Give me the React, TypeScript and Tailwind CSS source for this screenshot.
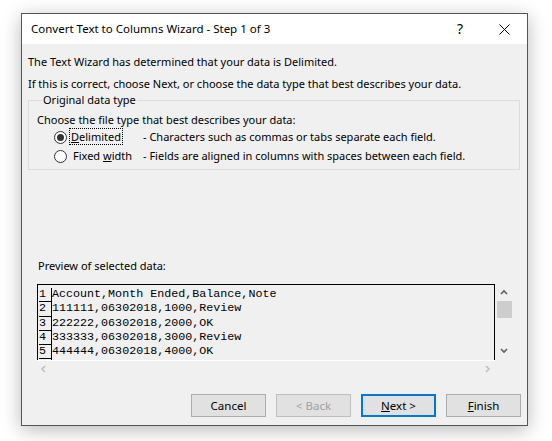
import React from 'react';

const rows = [
  'Account,Month Ended,Balance,Note',
  '111111,06302018,1000,Review',
  '222222,06302018,2000,OK',
  '333333,06302018,3000,Review',
  '444444,06302018,4000,OK',
];

function Chevron({ dir, className }: { dir: 'up' | 'down' | 'left' | 'right'; className?: string }) {
  const d =
    dir === 'up'
      ? 'M1 5 L4 2 L7 5'
      : dir === 'down'
      ? 'M1 2 L4 5 L7 2'
      : dir === 'left'
      ? 'M5 1 L2 4 L5 7'
      : 'M2 1 L5 4 L2 7';
  return (
    <svg width="8" height="8" viewBox="0 0 8 8" className={className}>
      <path d={d} fill="none" stroke="currentColor" strokeWidth="1.6" />
    </svg>
  );
}

function Radio({ checked }: { checked?: boolean }) {
  return (
    <span className="flex h-[13px] w-[13px] items-center justify-center rounded-full border border-[#333] bg-white">
      {checked && <span className="h-[7px] w-[7px] rounded-full bg-[#333]" />}
    </span>
  );
}

function Button({ children, variant }: { children: React.ReactNode; variant?: 'default' | 'disabled' }) {
  const cls =
    variant === 'default'
      ? 'border-2 border-[#0078d7] text-black'
      : variant === 'disabled'
      ? 'border border-[#bfbfbf] text-[#a0a0a0]'
      : 'border border-[#adadad] text-black';
  return (
    <button className={`flex h-[23px] w-[75px] items-center justify-center bg-[#e1e1e1] text-[11.5px] ${cls}`}>
      {children}
    </button>
  );
}

export default function App() {
  return (
    <div
      className="h-[441px] w-[552px] overflow-hidden bg-white pl-[21px] pt-[13px] text-[11px] leading-[16px] text-black"
      style={{ fontFamily: '"Noto Sans", "Open Sans", sans-serif' }}
    >
      <div className="flex h-[413px] w-[507px] flex-col border border-[#555] bg-[#f0f0f0] shadow-[0_4px_18px_rgba(0,0,0,0.28)]">
        {/* Title bar */}
        <div className="flex h-[30px] items-center bg-white pl-[9px] text-[11.5px]">
          <span className="flex-1">Convert Text to Columns Wizard - Step 1 of 3</span>
          <span className="mr-[36px] text-[14px]">?</span>
          <svg width="11" height="11" viewBox="0 0 11 11" className="mr-[17px]">
            <path d="M0.5 0.5 L10.5 10.5 M10.5 0.5 L0.5 10.5" stroke="#000" strokeWidth="1" />
          </svg>
        </div>

        {/* Body */}
        <div className="flex flex-1 flex-col px-[6px]">
          <p className="mt-[10px]">The Text Wizard has determined that your data is Delimited.</p>
          <p className="mt-[6px]">If this is correct, choose Next, or choose the data type that best describes your data.</p>

          <fieldset className="w-[492px] border border-[#dcdcdc] pb-[3px] pl-[8px]">
            <legend className="ml-[5px] px-[1px]">Original data type</legend>
            <p className="mt-[4px]">Choose the file type that best describes your data:</p>
            <div className="flex h-[18px] items-center pl-[17px]">
              <Radio checked />
              <span className="ml-[2px] w-[74px]">
                <span className="border border-dotted border-black px-[1px]">
                  <u>D</u>elimited
                </span>
              </span>
              <span>- Characters such as commas or tabs separate each field.</span>
            </div>
            <div className="flex h-[20px] items-center pl-[17px]">
              <Radio />
              <span className="ml-[2px] w-[74px] pl-[4px]">
                Fixed <u>w</u>idth
              </span>
              <span>- Fields are aligned in columns with spaces between each field.</span>
            </div>
          </fieldset>

          <p className="ml-[10px] mt-[88px]">Preview of selected data:</p>

          {/* Preview */}
          <div className="ml-[9px] mt-[10px] w-[475px]">
            <div className="flex h-[76px]">
              <div
                className="flex-1 overflow-hidden border-l border-r border-t border-black pt-[3px] text-[11.7px]"
                style={{ fontFamily: '"Liberation Mono", monospace' }}
              >
                {[...rows, ''].map((r, i) => (
                  <div key={i} className="flex h-[14.25px]">
                    <span className="w-[14px] border-r border-black pl-[1px]">
                      <span className="block h-[14.25px] border-b border-black leading-[13px]">
                        {r ? i + 1 : ''}
                      </span>
                    </span>
                    <span className="whitespace-pre leading-[13px]">{r}</span>
                  </div>
                ))}
              </div>
              <div className="flex w-[17px] flex-col items-center pl-[1px]">
                <Chevron dir="up" className="mt-[5px] text-[#606060]" />
                <div className="mt-[4px] h-[17px] w-[15px] bg-[#cdcdcd]" />
                <div className="flex-1" />
                <Chevron dir="down" className="mb-[5px] text-[#606060]" />
              </div>
            </div>
            <div className="flex h-[17px] w-[458px] items-center justify-between border-t border-white px-[3px]">
              <Chevron dir="left" className="text-[#c0c0c0]" />
              <Chevron dir="right" className="text-[#c0c0c0]" />
            </div>
          </div>

          {/* Buttons */}
          <div className="mt-[17px] flex justify-end gap-[10px]">
            <Button>Cancel</Button>
            <Button variant="disabled">&lt; Back</Button>
            <Button variant="default">
              <span>
                <u>N</u>ext &gt;
              </span>
            </Button>
            <Button>
              <span>
                <u>F</u>inish
              </span>
            </Button>
          </div>
        </div>
      </div>
    </div>
  );
}
